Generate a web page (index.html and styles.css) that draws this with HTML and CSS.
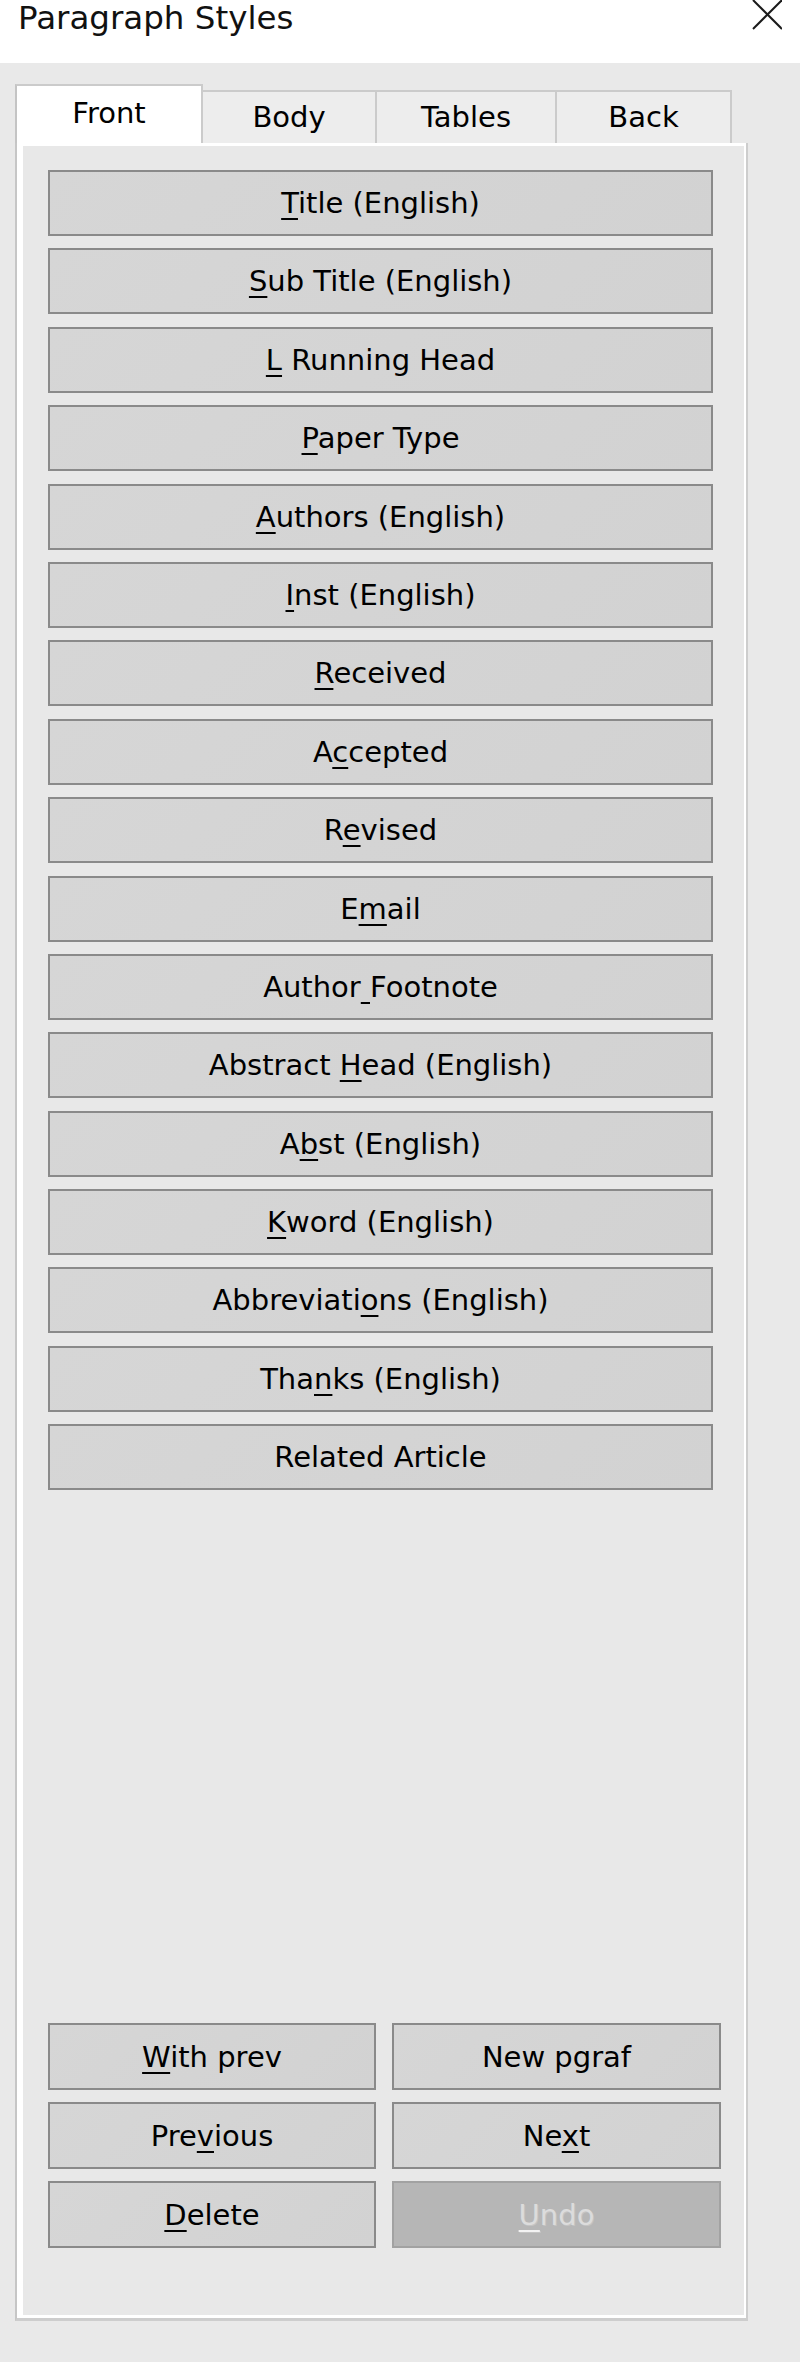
FILE: index.html
```html
<!DOCTYPE html>
<html lang="en">

<head>
    <meta charset="UTF-8">
    <meta name="viewport" content="width=device-width, initial-scale=1.0">
    <title>Paragraph Styles</title>
    <link rel="stylesheet" href="styles.css">
</head>

<body>
    <div class="titlebar">
        <span class="title">Paragraph Styles</span>
        <svg class="close" width="30" height="30" viewBox="0 0 30 30">
            <line x1="1" y1="0" x2="30" y2="29" />
            <line x1="30" y1="0" x2="1" y2="29" />
        </svg>
    </div>

    <div class="dialog">
        <div class="tabs">
            <div class="tab tab-front active">Front</div>
            <div class="tab tab-body">Body</div>
            <div class="tab tab-tables">Tables</div>
            <div class="tab tab-back">Back</div>
        </div>

        <div class="panel">
            <div class="style-list">
                <button class="style-btn"><span><u>T</u>itle (English)</span></button>
                <button class="style-btn"><span><u>S</u>ub Title (English)</span></button>
                <button class="style-btn"><span><u>L</u> Running Head</span></button>
                <button class="style-btn"><span><u>P</u>aper Type</span></button>
                <button class="style-btn"><span><u>A</u>uthors (English)</span></button>
                <button class="style-btn"><span><u>I</u>nst (English)</span></button>
                <button class="style-btn"><span><u>R</u>eceived</span></button>
                <button class="style-btn"><span>A<u>c</u>cepted</span></button>
                <button class="style-btn"><span>R<u>e</u>vised</span></button>
                <button class="style-btn"><span>E<u>m</u>ail</span></button>
                <button class="style-btn"><span>Author<u> </u>Footnote</span></button>
                <button class="style-btn"><span>Abstract <u>H</u>ead (English)</span></button>
                <button class="style-btn"><span>A<u>b</u>st (English)</span></button>
                <button class="style-btn"><span><u>K</u>word (English)</span></button>
                <button class="style-btn"><span>Abbreviati<u>o</u>ns (English)</span></button>
                <button class="style-btn"><span>Tha<u>n</u>ks (English)</span></button>
                <button class="style-btn"><span>Related Article</span></button>
            </div>

            <div class="actions">
                <button class="style-btn"><span><u>W</u>ith prev</span></button>
                <button class="style-btn"><span>New pgraf</span></button>
                <button class="style-btn"><span>Pre<u>v</u>ious</span></button>
                <button class="style-btn"><span>Ne<u>x</u>t</span></button>
                <button class="style-btn"><span><u>D</u>elete</span></button>
                <button class="style-btn disabled" disabled><span><u>U</u>ndo</span></button>
            </div>
        </div>
    </div>
</body>

</html>
```

FILE: styles.css
```css
/* Basic page styling */
body {
    margin: 0;
    background-color: #e9e9e9;
    font-family: "DejaVu Sans", sans-serif;
    color: #000;
}

/* Window title bar */
.titlebar {
    height: 63px;
    background-color: #fff;
    display: flex;
    justify-content: space-between;
    align-items: flex-start;
}

.title {
    padding-left: 18px;
    font-size: 32.5px;
    line-height: 37px;
    color: #111;
}

.close {
    margin-right: 18px;
    stroke: #1a1a1a;
    stroke-width: 2;
}

/* Dialog body */
.dialog {
    padding: 21px 0 0 15px;
}

/* Tab strip */
.tabs {
    display: flex;
    align-items: flex-end;
    height: 59px;
}

.tab {
    box-sizing: border-box;
    height: 53px;
    padding-top: 8px;
    font-size: 29px;
    line-height: 34px;
    text-align: center;
    background-color: #ededed;
    border-top: 2px solid #cbcbcb;
    border-right: 2px solid #cbcbcb;
}

.tab.active {
    height: 59px;
    padding-top: 10px;
    background-color: #fff;
    border-left: 2px solid #c4c4c4;
}

.tab-front {
    width: 188px;
}

.tab-body {
    width: 174px;
}

.tab-tables {
    width: 180px;
}

.tab-back {
    width: 175px;
}

/* Tab page */
.panel {
    box-sizing: border-box;
    width: 733px;
    height: 2178px;
    padding: 27px 33px 70px 31px;
    background-color: #e8e8e8;
    border-left: 2px solid #c6c6c6;
    border-right: 2px solid #cdcdcd;
    border-bottom: 3px solid #cdcdcd;
    box-shadow: inset 6px 0 0 #fff, inset -2px 0 0 #fff, inset 0 3px 0 #fff, inset 0 -3px 0 #fff;
    display: flex;
    flex-direction: column;
}

.style-list {
    display: flex;
    flex-direction: column;
    gap: 12.4px;
}

/* Button styling */
.style-btn {
    box-sizing: border-box;
    display: flex;
    align-items: center;
    justify-content: center;
    width: 100%;
    height: 66px;
    margin: 0;
    padding: 0;
    font-family: "DejaVu Sans", sans-serif;
    font-size: 29px;
    color: #000;
    white-space: pre;
    background: linear-gradient(135deg, #d6d6d6, #d2d2d2);
    border: 2px solid #8a8a8a;
    border-radius: 0;
}

.style-btn u {
    text-decoration-thickness: 2px;
    text-underline-offset: 5px;
}

/* Bottom command buttons */
.actions {
    margin-top: auto;
    margin-right: -8px;
    display: grid;
    grid-template-columns: 328px 329px;
    grid-auto-rows: 67px;
    column-gap: 16px;
    row-gap: 12px;
}

.actions .style-btn {
    height: 67px;
}

.style-btn.disabled {
    background: #b6b6b6;
    border-color: #a2a2a2;
    color: #dcdcdc;
    text-shadow: 1px 1px 0 #c4c4c4;
}

.style-btn.disabled u {
    text-decoration-color: #f2f2f2;
}
```
